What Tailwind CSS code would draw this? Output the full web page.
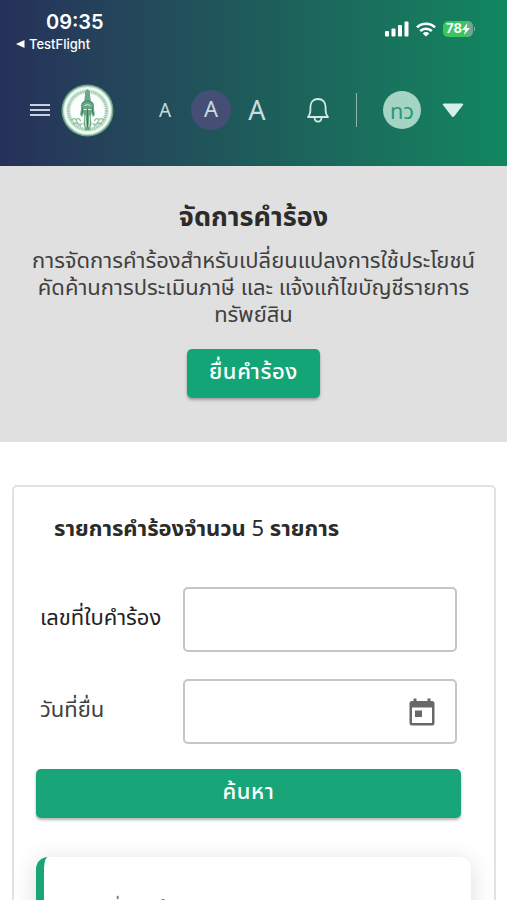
<!DOCTYPE html>
<html lang="th">
<head>
<meta charset="utf-8">
<meta name="viewport" content="width=device-width, initial-scale=1">
<title>จัดการคำร้อง</title>
<script src="https://cdn.jsdelivr.net/npm/@tailwindcss/browser@4"></script>
</head>
<body class="bg-white font-['Noto_Sans','Noto_Sans_Thai',sans-serif] text-[#333]">
<header class="bg-linear-to-r from-[#26305a] via-[#1d5c5a] to-[#10875f] pb-7 text-white">
  <div class="flex items-start justify-between pt-2 pr-8 pl-4 font-['Inter',sans-serif]">
    <div>
      <p class="pl-[30px] text-[20px] leading-7 font-semibold">09:35</p>
      <a href="#" class="flex items-center gap-1 text-[13px] leading-4 font-medium">
        <svg class="h-2 w-[9px]" viewBox="0 0 9 8" fill="currentColor" aria-hidden="true"><path d="M0 4 8.500 0v8z"/></svg>TestFlight</a>
    </div>
    <div class="mt-[13px] flex h-4 items-center gap-[7px]">
      <svg class="h-4 w-6" viewBox="0 0 24 16" fill="currentColor" aria-hidden="true"><rect x="0" y="10" width="4" height="5.500" rx="1"/><rect x="6.500" y="7.500" width="4" height="8" rx="1"/><rect x="13" y="4" width="4" height="11.500" rx="1"/><rect x="19.500" y="0.500" width="4" height="15" rx="1"/></svg>
      <svg class="h-[15px] w-5" viewBox="0 0 20 15" aria-hidden="true"><g fill="none" stroke="currentColor" stroke-width="2.600"><path d="M1 5.400a13 13 0 0 1 18 0"/><path d="M4.200 9a8.500 8.500 0 0 1 11.600 0"/></g><path d="M10 14.500 6.800 11.400a4.600 4.600 0 0 1 6.400 0z" fill="currentColor"/></svg>
      <div class="flex items-center">
        <div class="flex h-4 w-[30px] items-center justify-center rounded-[5px] bg-linear-to-r from-[#3cc45e] from-80% to-[#6fa590] to-80% text-[13px] font-bold">78<svg class="h-3 w-2" viewBox="0 0 8 12" fill="currentColor" aria-hidden="true"><path d="M5.500 0 0 7h3.200L2 12l6-7H4.700z"/></svg></div>
        <i class="ml-px h-1 w-px bg-white/40"></i>
      </div>
    </div>
  </div>
  <nav class="mt-[30px] flex h-[56px] items-center pr-[43px] pl-[30px]" aria-label="เมนูหลัก">
    <button type="button" aria-label="เมนู" class="flex w-5 flex-col gap-[3px] *:h-0.5 *:bg-[#c7d3dc]"><i class="block"></i><i class="block"></i><i class="block"></i></button>
    <a href="#" aria-label="หน้าแรก" class="ml-[11px]">
      <svg class="size-[53px]" viewBox="0 0 54 54" aria-hidden="true">
        <circle cx="27" cy="27" r="26.500" fill="#6ba584"/><circle cx="27" cy="27" r="25" fill="#c2dfce"/><circle cx="27" cy="27" r="23" fill="#e3f3e9" stroke="#f6fffa" stroke-width="1.500"/>
        <circle cx="27" cy="27" r="19.500" fill="none" stroke="#a3c9b2" stroke-width="3" stroke-dasharray="1.500 .7"/>
        <circle cx="27" cy="27" r="17" fill="#fbfefc"/>
        <g fill="none" stroke="#8fbfa2" stroke-width="1.300"><path d="M10 37q4-4 6 1t6 2M12 41q5-3 8 2M15 36q4-2 5 2M44 37q-4-4-6 1t-6 2M42 41q-5-3-8 2M39 36q-4-2-5 2"/></g>
        <path d="M27 5c2 2 3 3 2.500 6l1 6h-7l1-6C24 8 25 7 27 5z" fill="#6fa888"/>
        <path d="M22.500 18q4.500-3 9 0c2.500 2 2.500 4 2 7l1 6-2 3-1.500-5-.5 6 .5 6-2 6h-4l-2-6 .5-6-.5-6-1.500 5-2-3 1-6c-.5-3-.5-5 2-7z" fill="#68a685"/>
        <path d="M24 22q3-2 6 0M22.500 26h9M24.500 32l1 12M29.500 32l-1 12" fill="none" stroke="#d5eedf" stroke-width="1"/>
        <path d="M21.500 20q2.500-3 5.500-3t5.500 3M22 24q1 3-1 7M32 24q-1 3 1 7M27 25v19" fill="none" stroke="#33795a" stroke-width="1"/>
      </svg>
    </a>
    <div class="ml-auto flex items-center text-[#c9dbe0]">
      <button type="button" aria-label="ตัวอักษรเล็ก" class="w-5 text-[19px] leading-6">A</button>
      <button type="button" aria-label="ตัวอักษรปกติ" class="ml-4 size-10 rounded-full bg-[#454f76] pb-1 text-[22px] leading-9">A</button>
      <button type="button" aria-label="ตัวอักษรใหญ่" class="ml-4 w-5 text-[27px] leading-8">A</button>
    </div>
    <button type="button" aria-label="การแจ้งเตือน" class="ml-[39px]">
      <svg class="h-[26px] w-6" viewBox="0 0 24 26" fill="none" stroke="#d2ebe2" stroke-width="1.800" stroke-linejoin="round" aria-hidden="true"><path d="M2 20h20c-1.800-2.200-2.400-3.500-2.400-6.500V10C19.600 5 16.500 2 12 2S4.400 5 4.400 10v3.500c0 3-.6 4.300-2.400 6.500zM8.500 20.500c.3 5.500 6.700 5.500 7 0"/></svg>
    </button>
    <i class="ml-[26px] h-[34px] w-px bg-white/50"></i>
    <span class="ml-[26px] flex size-[38px] items-center justify-center rounded-full bg-[#a5d4c5] text-[22px] text-[#2b9877]">ทว</span>
    <button type="button" aria-label="เมนูผู้ใช้" class="ml-[21px]">
      <svg class="h-[15px] w-[22px]" viewBox="0 0 22 15" fill="#d5f0e6" aria-hidden="true"><path d="M2 .500h18q2 0 .8 1.700L12.300 13.300q-1.300 1.500-2.600 0L1.200 2.200Q0 .500 2 .500z"/></svg>
    </button>
  </nav>
</header>
<main>
  <section class="bg-[#e0e0e0] px-8 pt-[30px] pb-11 text-center">
    <h1 class="text-[27px] leading-10 font-bold text-[#2b2b2b]">จัดการคำร้อง</h1>
    <p class="-mx-2 mt-[10px] text-[22px] leading-[27px] text-[#404040]">การจัดการคำร้องสำหรับเปลี่ยนแปลงการใช้ประโยชน์ คัดค้านการประเมินภาษี และ แจ้งแก้ไขบัญชีรายการ<wbr>ทรัพย์สิน</p>
    <button type="button" class="mt-[22px] h-[49px] rounded-[5px] bg-[#14a577] px-[22px] pb-1.5 text-[22px] font-medium tracking-wide text-white shadow-[0_2px_3px_rgba(0,0,0,0.3)]">ยื่นคำร้อง</button>
  </section>
  <section class="mt-[43px] mr-[11px] ml-3 rounded-[5px] border-2 border-[#e2e2e2] pr-[23px] pb-8 pl-[22px]">
    <h2 class="mt-6 pl-[18px] text-[22px] leading-8 font-bold text-[#2b2b2b]">รายการคำร้องจำนวน <span class="font-normal">5</span> รายการ</h2>
    <form class="mt-11 pr-[10px]">
      <div class="flex flex-col gap-[27px] px-1">
        <div class="flex items-center">
          <label for="request-no" class="w-[143px] shrink-0 pb-1.5 text-[22px] text-[#222]">เลขที่ใบคำร้อง</label>
          <input id="request-no" type="text" class="h-[65px] min-w-0 flex-1 rounded-[5px] border-2 border-[#c6c6c6] px-4 text-[22px]">
        </div>
        <div class="flex items-center">
          <label for="request-date" class="w-[143px] shrink-0 pb-1.5 text-[22px] text-[#404040]">วันที่ยื่น</label>
          <div class="flex h-[65px] min-w-0 flex-1 items-center rounded-[5px] border-2 border-[#c6c6c6] pr-5 pl-4">
            <input id="request-date" type="text" class="min-w-0 flex-1 text-[22px] outline-none">
            <button type="button" aria-label="เลือกวันที่"><svg class="h-7 w-[26px]" viewBox="0 0 26 28" aria-hidden="true"><path d="M4.500.500h3V3h11V.500h3V3H23q2.500 0 2.500 2.500v19.500q0 2.500-2.500 2.500H3Q.500 27.500.500 25V5.500Q.500 3 3 3h1.500zM3 9.500V25h20V9.500zM6 12.500h7v6.500H6z" fill="#686868" fill-rule="evenodd"/></svg></button>
          </div>
        </div>
      </div>
      <button type="submit" class="mt-[25px] h-[49px] w-full rounded-[5px] bg-[#18a578] pb-1.5 text-[22px] font-medium tracking-wide text-white shadow-[0_2px_3px_rgba(0,0,0,0.3)]">ค้นหา</button>
    </form>
    <article class="mt-[39px] rounded-[12px] border-l-8 border-[#18a578] bg-white px-9 pt-9 pb-8 shadow-[0_4px_24px_rgba(0,0,0,0.14)]">
      <p class="text-[20px] leading-8 text-[#777]">เลขที่ใบคำร้อง</p>
    </article>
  </section>
</main>
</body>
</html>
